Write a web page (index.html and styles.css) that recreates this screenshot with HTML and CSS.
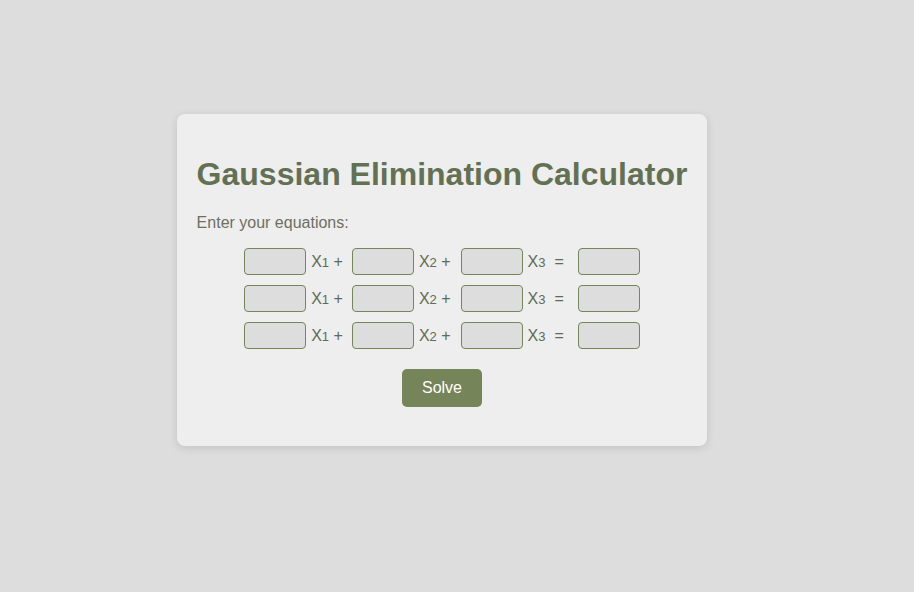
FILE: index.html
```html
<!DOCTYPE html>
<html>
<head>
<meta charset="utf-8">
<title>Gaussian Elimination Calculator</title>
<link rel="stylesheet" href="styles.css">
</head>
<body>
<div class="card">
  <h1 class="title">Gaussian Elimination Calculator</h1>
  <p class="prompt">Enter your equations:</p>
  <div class="equations">
    <div class="row">
      <input class="cell" type="text"><span class="var">X<span class="sub">1</span> +</span>
      <input class="cell" type="text"><span class="var v2">X<span class="sub">2</span> +</span>
      <input class="cell" type="text"><span class="var v3">X<span class="sub">3</span></span><span class="eq">=</span>
      <input class="cell" type="text">
    </div>
    <div class="row">
      <input class="cell" type="text"><span class="var">X<span class="sub">1</span> +</span>
      <input class="cell" type="text"><span class="var v2">X<span class="sub">2</span> +</span>
      <input class="cell" type="text"><span class="var v3">X<span class="sub">3</span></span><span class="eq">=</span>
      <input class="cell" type="text">
    </div>
    <div class="row">
      <input class="cell" type="text"><span class="var">X<span class="sub">1</span> +</span>
      <input class="cell" type="text"><span class="var v2">X<span class="sub">2</span> +</span>
      <input class="cell" type="text"><span class="var v3">X<span class="sub">3</span></span><span class="eq">=</span>
      <input class="cell" type="text">
    </div>
  </div>
  <div class="actions">
    <button class="solve" type="button">Solve</button>
  </div>
</div>
</body>
</html>
```
FILE: styles.css
```css
html, body {
  margin: 0;
}
body {
  background: #dddddd;
  font-family: "Liberation Sans", Arial, sans-serif;
  min-height: 100vh;
  box-sizing: border-box;
  display: flex;
  justify-content: center;
  align-items: center;
  padding: 0 30px 32px 0;
}
.card {
  background: #eeeeee;
  border-radius: 8px;
  padding: 20px;
  box-shadow: 0 2px 8px rgba(0, 0, 0, 0.12);
}
.title {
  font-size: 32px;
  font-weight: bold;
  color: #627154;
  margin: 22px 0 21px;
  white-space: nowrap;
}
.prompt {
  font-size: 16px;
  color: #6d705f;
  margin: 21px 0 16px;
}
.equations {
  display: flex;
  flex-direction: column;
  align-items: center;
  gap: 10px;
}
.row {
  display: flex;
  align-items: center;
}
.cell {
  box-sizing: border-box;
  width: 62px;
  height: 27px;
  margin: 0;
  padding: 2px 4px;
  border: 1px solid #76855a;
  border-radius: 4px;
  background: #dddddd;
  font-family: inherit;
  font-size: 14px;
}
.var {
  font-size: 16px;
  color: #5f6b58;
  margin: 0 9px 0 5px;
  white-space: nowrap;
}
.var.v2 {
  margin-right: 10px;
}
.var.v3 {
  margin-right: 9px;
}
.sub {
  font-size: 13px;
}
.eq {
  font-size: 16px;
  color: #5f6b58;
  margin-right: 14px;
}
.actions {
  display: flex;
  justify-content: center;
  margin: 20px 0 19px;
}
.solve {
  width: 80px;
  height: 38px;
  background: #768459;
  color: #ffffff;
  border: none;
  border-radius: 5px;
  font-family: inherit;
  font-size: 16px;
  padding: 0;
}
```
